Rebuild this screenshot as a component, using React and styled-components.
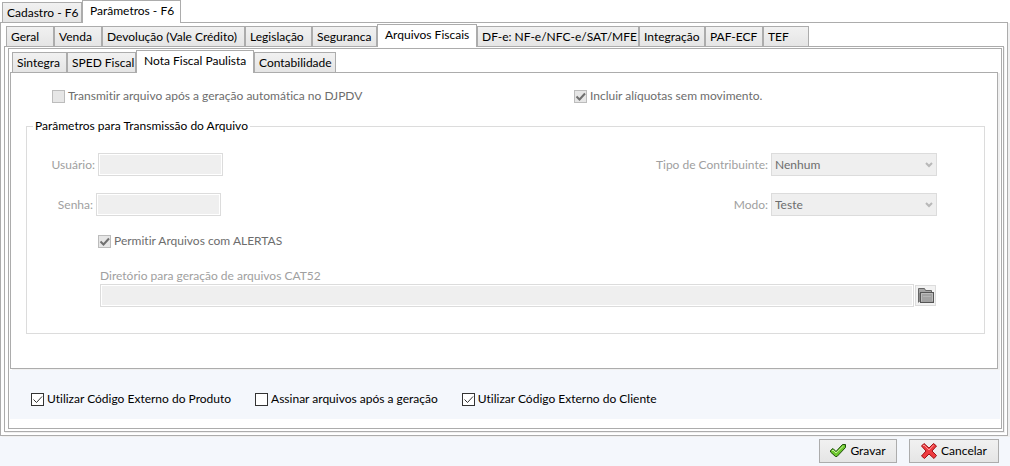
import { useState } from "react";
import styled, { createGlobalStyle, css } from "styled-components";

const colors = {
  line: "#acacac",
  softLine: "#dcdcdc",
  shadow: "#f0f0f0",
  page: "#f4f7fc",
  disabled: "#efefef",
  label: "#a0a0a0",
  disabledText: "#6d6d6d",
};

const mainTabs = [
  { label: "Cadastro - F6", width: 80 },
  { label: "Parâmetros - F6", width: 99 },
];

const paramTabs = [
  { label: "Geral", width: 48 },
  { label: "Venda", width: 48 },
  { label: "Devolução (Vale Crédito)", width: 143 },
  { label: "Legislação", width: 67 },
  { label: "Seguranca", width: 65 },
  { label: "Arquivos Fiscais", width: 100 },
  { label: "DF-e: NF-e/NFC-e/SAT/MFE", width: 162 },
  { label: "Integração", width: 66 },
  { label: "PAF-ECF", width: 58 },
  { label: "TEF", width: 46 },
];

const fiscalTabs = [
  { label: "Sintegra", width: 55 },
  { label: "SPED Fiscal", width: 69 },
  { label: "Nota Fiscal Paulista", width: 118 },
  { label: "Contabilidade", width: 82 },
];

const Tabs = ({ items, initial, label }) => {
  const [active, setActive] = useState(initial);
  return (
    <TabBar role="tablist" aria-label={label}>
      {items.map((item, index) => (
        <Tab
          key={item.label}
          type="button"
          role="tab"
          aria-selected={index === active}
          $active={index === active}
          $width={item.width}
          onClick={() => setActive(index)}
        >
          {item.label}
        </Tab>
      ))}
    </TabBar>
  );
};

const Check = ({ label, checked, disabled }) => (
  <CheckLabel $disabled={disabled}>
    <CheckInput type="checkbox" defaultChecked={checked} disabled={disabled} />
    <CheckMark viewBox="0 0 13 13" $disabled={disabled} aria-hidden="true">
      <path d="M2.5 6.5 L5.5 9.5 L11 3.5" />
    </CheckMark>
    {label}
  </CheckLabel>
);

const Select = ({ id, options }) => (
  <SelectBox>
    <SelectInput id={id} disabled>
      {options.map((option) => (
        <option key={option}>{option}</option>
      ))}
    </SelectInput>
    <Arrow viewBox="0 0 8 6" aria-hidden="true">
      <path d="M1 1 L4 4 L7 1" />
    </Arrow>
  </SelectBox>
);

const FolderIcon = () => (
  <svg width="16" height="16" viewBox="0 0 16 16" aria-hidden="true">
    <path d="M0.5 14.5 V0.5 H6.5 L7.5 2.5 H13.5 V5" fill="#a4a4a4" stroke="#666" />
    <path d="M1 14 V5 H3 V14 Z" fill="#8a8a8a" />
    <rect x="2.5" y="4.5" width="13" height="10" fill="#a2a2a2" stroke="#555" />
    <path d="M3.5 13.5 V5.5 H14.5 V13" fill="none" stroke="#bdbdbd" />
    <path d="M5 8.5 H13" stroke="#b4b4b4" />
  </svg>
);

const SaveIcon = () => (
  <svg width="16" height="16" viewBox="0 0 16 16" aria-hidden="true">
    <path
      d="M0.5 7.5 L3 5.5 L6 8.5 L12.5 1.5 H15.5 V4.5 L7 13.5 H5.5 L0.5 9 Z"
      fill="#6cc62c"
      stroke="#1d4d0b"
    />
    <path d="M2 8 L3 7 L6 10 L13.5 3" fill="none" stroke="#c6f29a" />
  </svg>
);

const CancelIcon = () => (
  <svg width="16" height="16" viewBox="0 0 16 16" aria-hidden="true">
    <path
      d="M0.5 3 L3 0.5 L8 5 L12.5 0.5 L15.5 3 L11 8 L15.5 12.5 L13 15.5 L8 11 L3.5 15.5 L0.5 13 L5 8 Z"
      fill="#ee3b3f"
      stroke="#9c1217"
    />
    <path d="M2 3 L3 2 L8 7 L12.5 2" fill="none" stroke="#ff9a9a" />
  </svg>
);

export default function App() {
  return (
    <>
      <GlobalStyle />
      <Page>
        <Tabs items={mainTabs} initial={1} label="Principal" />
        <MainPanel>
          <Tabs items={paramTabs} initial={5} label="Parâmetros" />
          <ParamPanel>
            <InnerPanel>
              <Tabs items={fiscalTabs} initial={2} label="Arquivos Fiscais" />
              <FiscalPanel>
                <TopChecks>
                  <Check label="Transmitir arquivo após a geração automática no DJPDV" disabled />
                  <Check label="Incluir alíquotas sem movimento." checked disabled />
                </TopChecks>
                <Group>
                  <legend>Parâmetros para Transmissão do Arquivo</legend>
                  <FieldRow>
                    <Field>
                      <Label htmlFor="usuario" $width={68}>Usuário:</Label>
                      <TextInput id="usuario" disabled />
                    </Field>
                    <Field>
                      <Label htmlFor="tipo">Tipo de Contribuinte:</Label>
                      <Select id="tipo" options={["Nenhum"]} />
                    </Field>
                  </FieldRow>
                  <FieldRow>
                    <Field>
                      <Label htmlFor="senha" $width={66}>Senha:</Label>
                      <TextInput id="senha" type="password" disabled />
                    </Field>
                    <Field>
                      <Label htmlFor="modo">Modo:</Label>
                      <Select id="modo" options={["Teste", "Normal"]} />
                    </Field>
                  </FieldRow>
                  <Nested>
                    <Check label="Permitir Arquivos com ALERTAS" checked disabled />
                    <Directory>
                      <Label htmlFor="diretorio">Diretório para geração de arquivos CAT52</Label>
                      <DirectoryRow>
                        <TextInput id="diretorio" $grow disabled />
                        <FolderButton type="button" aria-label="Selecionar diretório" disabled>
                          <FolderIcon />
                        </FolderButton>
                      </DirectoryRow>
                    </Directory>
                  </Nested>
                </Group>
              </FiscalPanel>
              <Options>
                <Check label="Utilizar Código Externo do Produto" checked />
                <Check label="Assinar arquivos após a geração" />
                <Check label="Utilizar Código Externo do Cliente" checked />
              </Options>
            </InnerPanel>
          </ParamPanel>
        </MainPanel>
        <Actions>
          <ActionButton type="button">
            <SaveIcon />
            Gravar
          </ActionButton>
          <ActionButton type="button" $wide>
            <CancelIcon />
            Cancelar
          </ActionButton>
        </Actions>
      </Page>
    </>
  );
}

const GlobalStyle = createGlobalStyle`
  * {
    box-sizing: border-box;
  }
  body {
    margin: 0;
    background: ${colors.page};
    color: #000;
  }
  body, button, input, select {
    font-family: Lato, "Open Sans", sans-serif;
    font-size: 12px;
    line-height: 16px;
    font-variant-ligatures: none;
  }
`;

const Page = styled.main`
  background: linear-gradient(#fff 420px, ${colors.page} 420px);
`;

const TabBar = styled.div`
  display: flex;
  align-items: flex-end;
  height: 22px;
  padding-left: 2px;
`;

const Tab = styled.button`
  flex: none;
  width: ${({ $width }) => $width}px;
  height: 20px;
  padding: 0 0 0 4px;
  border: 1px solid ${colors.line};
  border-bottom: none;
  background: linear-gradient(#f1f1f1, #e5e5e5);
  color: #000;
  text-align: left;
  white-space: nowrap;
  ${({ $active }) =>
    $active &&
    css`
      z-index: 1;
      height: 23px;
      margin-bottom: -1px;
      padding: 0 0 2px 7px;
      background: #fff;
    `}
`;

const Panel = styled.div`
  border: 1px solid ${colors.line};
  background: #fff;
`;

const MainPanel = styled(Panel)`
  margin-right: 2px;
  padding: 1px 3px 3px;
  box-shadow: 2px 1px 0 ${colors.shadow};
`;

const ParamPanel = styled(Panel)`
  padding: 1px 1px 2px 3px;
  box-shadow: 1px 1px 0 ${colors.shadow};
`;

const InnerPanel = styled(Panel)`
  padding: 1px 1px 9px;
`;

const FiscalPanel = styled(Panel)`
  margin-right: 2px;
  padding: 15px 12px 34px 15px;
  box-shadow: 2px 1px 0 ${colors.shadow};
`;

const TopChecks = styled.div`
  display: grid;
  grid-template-columns: 522fr 411fr;
  padding-left: 26px;
`;

const CheckLabel = styled.label`
  display: flex;
  align-items: center;
  gap: 3px;
  width: max-content;
  position: relative;
  color: ${({ $disabled }) => ($disabled ? colors.disabledText : "#000")};
`;

const CheckInput = styled.input`
  appearance: none;
  flex: none;
  width: 13px;
  height: 13px;
  margin: 0;
  border: 1px solid #333;
  background: #fff;
  &:disabled {
    border-color: #bcbcbc;
    background: #e6e6e6;
  }
  &:not(:checked) + svg {
    display: none;
  }
`;

const CheckMark = styled.svg`
  position: absolute;
  left: 0;
  width: 13px;
  height: 13px;
  fill: none;
  stroke: ${({ $disabled }) => ($disabled ? "#707070" : "#333")};
  stroke-width: ${({ $disabled }) => ($disabled ? 2 : 1)};
  pointer-events: none;
`;

const Group = styled.fieldset`
  margin: 14px 0 0;
  padding: 19px 47px 26px 0;
  border: 1px solid ${colors.softLine};
  legend {
    margin-left: 6px;
    padding: 0 2px;
  }
`;

const FieldRow = styled.div`
  display: flex;
  justify-content: space-between;
  margin-bottom: 17px;
`;

const Field = styled.div`
  display: flex;
  align-items: center;
  gap: 3px;
`;

const Label = styled.label`
  width: ${({ $width }) => ($width ? `${$width}px` : "auto")};
  color: ${colors.label};
  text-align: right;
`;

const TextInput = styled.input`
  width: 125px;
  height: 23px;
  padding: 0 4px;
  border: 1px solid ${colors.softLine};
  background: ${colors.disabled};
  box-shadow: inset 0 0 0 1px #fff;
  ${({ $grow }) =>
    $grow &&
    css`
      flex: 1;
    `}
`;

const SelectBox = styled.div`
  display: flex;
  align-items: center;
  position: relative;
`;

const SelectInput = styled.select`
  appearance: none;
  width: 166px;
  height: 23px;
  padding: 0 20px 0 3px;
  border: 1px solid ${colors.softLine};
  border-radius: 0;
  background: ${colors.disabled};
  color: ${colors.disabledText};
  opacity: 1;
`;

const Arrow = styled.svg`
  position: absolute;
  right: 4px;
  width: 8px;
  height: 6px;
  fill: none;
  stroke: #b8b8b8;
  stroke-width: 2;
  pointer-events: none;
`;

const Nested = styled.div`
  padding: 0 1px 0 71px;
`;

const Directory = styled.div`
  display: flex;
  flex-direction: column;
  align-items: flex-start;
  margin: 19px 0 0 2px;
`;

const DirectoryRow = styled.div`
  display: flex;
  align-items: center;
  gap: 1px;
  width: 100%;
`;

const FolderButton = styled.button`
  display: grid;
  place-items: center;
  width: 21px;
  height: 21px;
  padding: 0;
  border: 1px solid ${colors.softLine};
  background: #f2f2f2;
`;

const Options = styled.div`
  display: flex;
  align-items: center;
  gap: 24px;
  height: 49px;
  margin-top: 1px;
  padding: 9px 0 0 21px;
  background: ${colors.page};
`;

const Actions = styled.div`
  display: flex;
  justify-content: flex-end;
  gap: 12px;
  padding: 3px 11px 2px 0;
`;

const ActionButton = styled.button`
  display: flex;
  align-items: center;
  justify-content: center;
  gap: 4px;
  width: ${({ $wide }) => ($wide ? 90 : 78)}px;
  height: 24px;
  padding: 0;
  border: 1px solid ${colors.line};
  background: linear-gradient(#f1f1f1, #e5e5e5);
  color: #000;
`;
